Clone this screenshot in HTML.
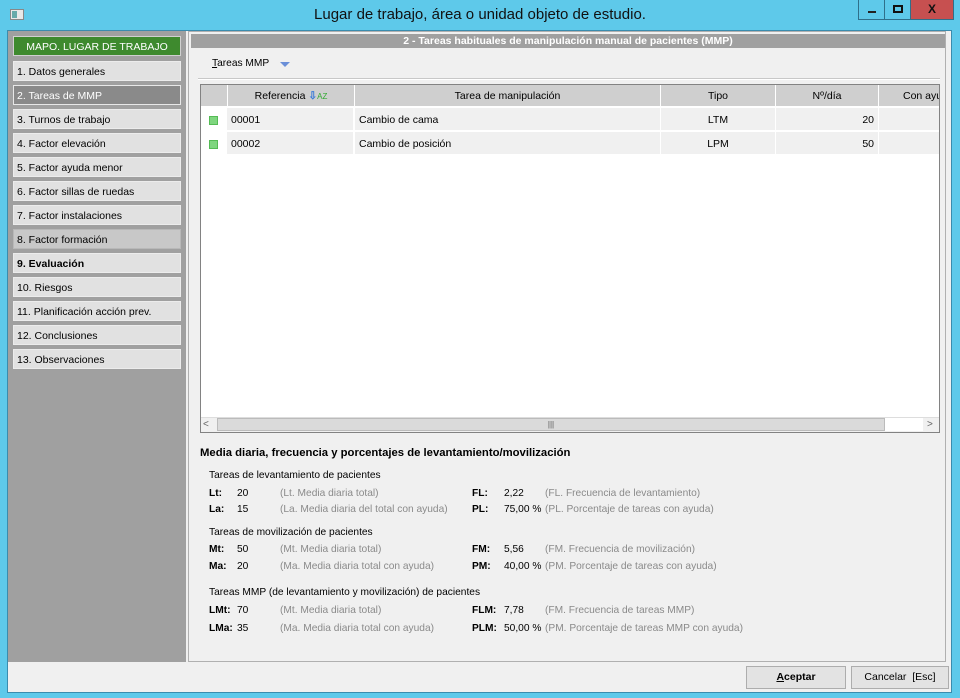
<!DOCTYPE html>
<html><head><meta charset="utf-8"><style>
*{margin:0;padding:0;box-sizing:border-box}
body{width:960px;height:698px;overflow:hidden;background:#5ec9ea;font-family:"Liberation Sans",sans-serif;font-size:10.5px;color:#000;position:relative}
.a{position:absolute}
.title{left:0;top:0;width:960px;height:30px;text-align:center;line-height:30px;font-size:15px;color:#111}
.win{left:7px;top:30px;width:945px;height:663px;background:#f0f0f0;border:1px solid #3a8cae}
.side{left:8px;top:31px;width:178px;height:631px;background:#a0a0a0}
.it{position:absolute;left:5px;width:168px;height:20px;background:#e1e1e1;border:1px solid #ececec;line-height:20px;padding-left:3px;font-size:10.5px}
.main{left:188px;top:31px;width:758px;height:631px;background:#f0f0f0;border:1px solid #b0b0b0}
.hdr{left:191px;top:34px;width:754px;height:14px;background:#a0a0a0;color:#fff;font-weight:bold;text-align:center;line-height:14px;font-size:10.5px}
.grid{left:200px;top:84px;width:740px;height:349px;background:#fff;border:1px solid #828282;overflow:hidden}
.th{position:absolute;top:0;height:22px;background:#cfcfcf;border-right:1px solid #fff;border-bottom:1px solid #fff;text-align:center;line-height:22px;white-space:nowrap;overflow:hidden}
.td{position:absolute;height:22px;background:#f0f0f0;line-height:24px;padding:0 4px}
.l{position:absolute;font-size:10.2px;white-space:nowrap}
.g{color:#8a8a8a}
.b{font-weight:bold}
.btn{position:absolute;top:666px;height:23px;background:#e3e3e3;border:1px solid #adadad;text-align:center;line-height:21px}
</style></head><body>
<div class="a" style="left:10px;top:9px;width:14px;height:11px;background:#e8e8e8;border:1px solid #888"></div>
<div class="a" style="left:12px;top:11px;width:5px;height:7px;background:#6aa"></div>
<div class="a title">Lugar de trabajo, área o unidad objeto de estudio.</div>
<div class="a" style="left:858px;top:0;width:27px;height:20px;border:1px solid #2f6f8a;border-top:none"><div class="a" style="left:9px;top:11px;width:8px;height:2px;background:#222"></div></div>
<div class="a" style="left:884px;top:0;width:27px;height:20px;border:1px solid #2f6f8a;border-top:none"><div class="a" style="left:8px;top:5px;width:10px;height:8px;border:2px solid #111"></div></div>
<div class="a" style="left:910px;top:0;width:44px;height:20px;background:#c75050;border:1px solid #2f6f8a;border-top:none;color:#111;font-weight:bold;text-align:center;line-height:18px;font-size:12px">X</div>
<div class="a win"></div>
<div class="a side">
<div class="it" style="top:5px;background:#3e8a2e;border-color:#d0d0d0;color:#fff;text-align:center;padding:0">MAPO. LUGAR DE TRABAJO</div>
<div class="it" style="top:30px">1. Datos generales</div>
<div class="it" style="top:54px;background:#8a8a8a;border-color:#e8e8e8;color:#fff">2. Tareas de MMP</div>
<div class="it" style="top:78px">3. Turnos de trabajo</div>
<div class="it" style="top:102px">4. Factor elevación</div>
<div class="it" style="top:126px">5. Factor ayuda menor</div>
<div class="it" style="top:150px">6. Factor sillas de ruedas</div>
<div class="it" style="top:174px">7. Factor instalaciones</div>
<div class="it" style="top:198px;background:#c8c8c8;border-color:#b8b8b8">8. Factor formación</div>
<div class="it b" style="top:222px">9. Evaluación</div>
<div class="it" style="top:246px">10. Riesgos</div>
<div class="it" style="top:270px">11. Planificación acción prev.</div>
<div class="it" style="top:294px">12. Conclusiones</div>
<div class="it" style="top:318px">13. Observaciones</div>
</div>
<div class="a main"></div>
<div class="a hdr">2 - Tareas habituales de manipulación manual de pacientes (MMP)</div>
<div class="l" style="left:212px;top:58px"><u>T</u>areas MMP</div>
<div class="a" style="left:280px;top:62px;width:0;height:0;border-left:5px solid transparent;border-right:5px solid transparent;border-top:5px solid #6a8fd8"></div>
<div class="a" style="left:198px;top:78px;width:742px;height:2px;border-top:1px solid #c8c8c8;border-bottom:1px solid #fff"></div>
<div class="a grid">
<div class="th" style="left:0;width:27px"></div>
<div class="th" style="left:27px;width:127px">Referencia <span style="color:#3a7ad8;font-weight:bold">⇩</span><span style="color:#3a3;font-size:8px">AZ</span></div>
<div class="th" style="left:154px;width:306px">Tarea de manipulación</div>
<div class="th" style="left:460px;width:115px">Tipo</div>
<div class="th" style="left:575px;width:103px">Nº/día</div>
<div class="th" style="left:678px;width:80px;text-align:left;padding-left:24px">Con ayuda</div>
<div class="a" style="left:8px;top:31px;width:9px;height:9px;background:#7fd67f;border:1px solid #5b5"></div>
<div class="td" style="left:26px;top:23px;width:126px">00001</div>
<div class="td" style="left:154px;top:23px;width:305px">Cambio de cama</div>
<div class="td" style="left:460px;top:23px;width:114px;text-align:center">LTM</div>
<div class="td" style="left:575px;top:23px;width:102px;text-align:right">20</div>
<div class="td" style="left:678px;top:23px;width:62px"></div>
<div class="a" style="left:8px;top:55px;width:9px;height:9px;background:#7fd67f;border:1px solid #5b5"></div>
<div class="td" style="left:26px;top:47px;width:126px">00002</div>
<div class="td" style="left:154px;top:47px;width:305px">Cambio de posición</div>
<div class="td" style="left:460px;top:47px;width:114px;text-align:center">LPM</div>
<div class="td" style="left:575px;top:47px;width:102px;text-align:right">50</div>
<div class="td" style="left:678px;top:47px;width:62px"></div>
<div class="a" style="left:0;top:332px;width:738px;height:15px;background:#f0f0f0;border-top:1px solid #ddd"></div>
<div class="a" style="left:2px;top:332px;width:12px;height:15px;color:#666;font-size:10px;line-height:15px">&lt;</div>
<div class="a" style="left:16px;top:333px;width:668px;height:13px;background:#dadada;border:1px solid #bbb;text-align:center;font-size:8px;line-height:12px;color:#555">|||</div>
<div class="a" style="left:684px;top:333px;width:38px;height:13px;background:#fff"></div>
<div class="a" style="left:726px;top:332px;width:10px;height:15px;color:#666;font-size:10px;line-height:15px">&gt;</div>
</div>
<div class="l b" style="left:200px;top:447px;font-size:11.3px">Media diaria, frecuencia y porcentajes de levantamiento/movilización</div>
<div class="l" style="left:209px;top:470px">Tareas de levantamiento de pacientes</div>
<div class="l b" style="left:209px;top:488px">Lt:</div><div class="l" style="left:237px;top:488px">20</div><div class="l g" style="left:280px;top:488px">(Lt. Media diaria total)</div>
<div class="l b" style="left:472px;top:488px">FL:</div><div class="l" style="left:504px;top:488px">2,22</div><div class="l g" style="left:545px;top:488px">(FL. Frecuencia de levantamiento)</div>
<div class="l b" style="left:209px;top:504px">La:</div><div class="l" style="left:237px;top:504px">15</div><div class="l g" style="left:280px;top:504px">(La. Media diaria del total con ayuda)</div>
<div class="l b" style="left:472px;top:504px">PL:</div><div class="l" style="left:504px;top:504px">75,00 %</div><div class="l g" style="left:545px;top:504px">(PL. Porcentaje de tareas con ayuda)</div>
<div class="l" style="left:209px;top:527px">Tareas de movilización de pacientes</div>
<div class="l b" style="left:209px;top:544px">Mt:</div><div class="l" style="left:237px;top:544px">50</div><div class="l g" style="left:280px;top:544px">(Mt. Media diaria total)</div>
<div class="l b" style="left:472px;top:544px">FM:</div><div class="l" style="left:504px;top:544px">5,56</div><div class="l g" style="left:545px;top:544px">(FM. Frecuencia de movilización)</div>
<div class="l b" style="left:209px;top:561px">Ma:</div><div class="l" style="left:237px;top:561px">20</div><div class="l g" style="left:280px;top:561px">(Ma. Media diaria total con ayuda)</div>
<div class="l b" style="left:472px;top:561px">PM:</div><div class="l" style="left:504px;top:561px">40,00 %</div><div class="l g" style="left:545px;top:561px">(PM. Porcentaje de tareas con ayuda)</div>
<div class="l" style="left:209px;top:587px">Tareas MMP (de levantamiento y movilización) de pacientes</div>
<div class="l b" style="left:209px;top:605px">LMt:</div><div class="l" style="left:237px;top:605px">70</div><div class="l g" style="left:280px;top:605px">(Mt. Media diaria total)</div>
<div class="l b" style="left:472px;top:605px">FLM:</div><div class="l" style="left:504px;top:605px">7,78</div><div class="l g" style="left:545px;top:605px">(FM. Frecuencia de tareas MMP)</div>
<div class="l b" style="left:209px;top:623px">LMa:</div><div class="l" style="left:237px;top:623px">35</div><div class="l g" style="left:280px;top:623px">(Ma. Media diaria total con ayuda)</div>
<div class="l b" style="left:472px;top:623px">PLM:</div><div class="l" style="left:504px;top:623px">50,00 %</div><div class="l g" style="left:545px;top:623px">(PM. Porcentaje de tareas MMP con ayuda)</div>
<div class="btn b" style="left:746px;width:100px"><u>A</u>ceptar</div>
<div class="btn" style="left:851px;width:98px">Cancelar&nbsp; [Esc]</div>
</body></html>
